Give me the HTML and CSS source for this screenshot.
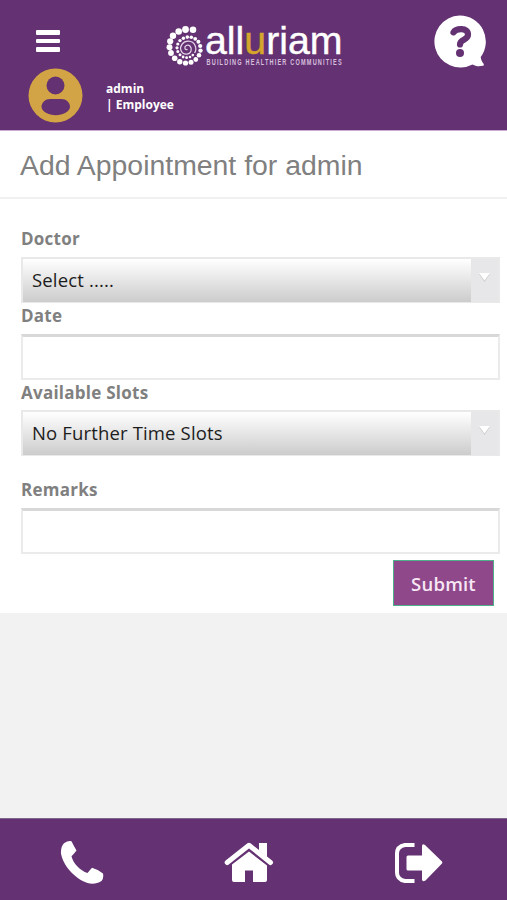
FILE: index.html
```
<!DOCTYPE html>
<html lang="en">
	<head>
		<meta charset="utf-8">
		<meta name="viewport" content="width=device-width, initial-scale=1">
		<title>Add Appointment</title>
		<link rel="stylesheet" href="styles.css">
	</head>

	<body>
		<div class="page">
			<header class="header">
				<div class="bar">
					<div class="menu">
						<span></span>
						<span></span>
						<span></span>
					</div>
					<svg class="logo" width="178" height="54" viewBox="165 16 178 54">
						<!-- dotted spiral -->
						<g fill="#fff">
							<circle cx="193" cy="29.7" r="3.3"/>
							<circle cx="185.5" cy="29.5" r="3.4"/>
							<circle cx="178.7" cy="31.5" r="3.3"/>
							<circle cx="173" cy="35.7" r="3.2"/>
							<circle cx="170.2" cy="41.3" r="3.1"/>
							<circle cx="169.5" cy="47.3" r="3"/>
							<circle cx="171" cy="53" r="2.9"/>
							<circle cx="174.7" cy="58.2" r="2.8"/>
							<circle cx="179.8" cy="61.7" r="2.7"/>
							<circle cx="185.5" cy="63" r="2.6"/>
							<circle cx="191" cy="62.2" r="2.5"/>
							<circle cx="195.8" cy="59.5" r="2.4"/>
							<circle cx="199" cy="55.3" r="2.3"/>
							<circle cx="200.5" cy="50.6" r="2.2"/>
							<circle cx="200.2" cy="46" r="2.1"/>
							<circle cx="198.4" cy="41.8" r="2"/>
							<circle cx="195.2" cy="38.8" r="1.9"/>
							<circle cx="191.3" cy="37.2" r="1.8"/>
							<circle cx="187.3" cy="37.1" r="1.8"/>
							<circle cx="183.4" cy="38.3" r="1.7"/>
							<circle cx="180" cy="40.6" r="1.7"/>
							<circle cx="177.8" cy="44" r="1.6"/>
							<circle cx="177" cy="47.8" r="1.6"/>
							<circle cx="177.8" cy="51.6" r="1.5"/>
							<circle cx="180" cy="54.8" r="1.5"/>
							<circle cx="183.1" cy="57" r="1.4"/>
							<circle cx="186.6" cy="57.7" r="1.4"/>
							<circle cx="190" cy="57" r="1.3"/>
							<circle cx="192.8" cy="55.1" r="1.3"/>
						</g>
						<path d="M194.600 53C197.500 48.500 195 41.500 188.500 41.200C182.500 41 179.500 46.500 181 50.500C183 55.500 189.500 55 191 51C192.300 47 189 44.200 186.300 45.500C183.800 46.800 184.800 50.500 187.500 49.300" fill="none" stroke="#e3d3e8" stroke-width="1.3"/>
						<text class="logo-name" x="205" y="53.500" textLength="137.500" lengthAdjust="spacingAndGlyphs">all<tspan class="gold">u</tspan>riam</text>
						<text class="logo-tag" transform="translate(206.500 64.700) scale(.62 1)" textLength="218">BUILDING HEALTHIER COMMUNITIES</text>
					</svg>
					<svg class="help" width="54" height="54" viewBox="0 0 54 54">
						<path d="M26.500 .5A26 26 0 1 0 39.500 49.500C43 51.500 46 51.500 50 50.800C51.300 50.300 51 49 50 48C48.500 46 48 44 47.700 42A26 26 0 0 0 26.500 .5Z" fill="#fff"/>
						<path d="M20.500 17.300C23 13.300 35 12.300 35 19.500C35 25.500 27 24 27 29.500" fill="none" stroke="#643172" stroke-width="6.200" stroke-linecap="round"/>
						<circle cx="27" cy="38" r="4" fill="#643172"/>
					</svg>
				</div>
				<div class="user">
					<svg width="55" height="55" viewBox="0 0 55 55">
						<circle cx="27.500" cy="27.500" r="27" fill="#d3a445"/>
						<circle cx="27.500" cy="17.500" r="9" fill="#643172"/>
						<path d="M22 31H33.500C38 31 42 34.500 42 38.800C42 43.500 35 47.300 27.700 47.300C20.500 47.300 13.500 43.500 13.500 38.800C13.500 34.500 17.500 31 22 31Z" fill="#643172"/>
					</svg>
					<div class="user-name">admin<br>| Employee</div>
				</div>
			</header>

			<main class="content">
				<h1 class="title">Add Appointment for admin</h1>
				<form class="form">
					<label class="label">Doctor</label>
					<div class="select doctor"><span>Select .....</span><i><svg width="13" height="11" viewBox="0 0 13 11"><path d="M1 2H12L6.500 10Z" fill="#ccc"/><path d="M1 1H12L6.500 8.500Z" fill="#fff"/></svg></i></div>
					<label class="label">Date</label>
					<input class="input" type="text">
					<label class="label available">Available Slots</label>
					<div class="select slots"><span>No Further Time Slots</span><i><svg width="13" height="11" viewBox="0 0 13 11"><path d="M1 2H12L6.500 10Z" fill="#ccc"/><path d="M1 1H12L6.500 8.500Z" fill="#fff"/></svg></i></div>
					<label class="label remarks">Remarks</label>
					<input class="input" type="text">
					<button class="submit" type="button">Submit</button>
				</form>
			</main>

			<footer class="footer">
				<svg width="44" height="44" viewBox="0 0 44 44">
					<path d="M4 2.300Q8 -.5 11.500 .3Q13.500 4.500 16.500 9.500Q14 12.800 11.500 15.200C13 22 20 29.500 27.500 32Q30 29 32 26.800Q38 28.500 43 32.500Q44 37 41.500 40C37 43 32 43.300 27.500 42C14.500 37.500 3 24.500 1 12.500Q.5 6 4 2.300Z" fill="#fff"/>
				</svg>
				<svg width="50" height="42" viewBox="0 0 50 42">
					<path d="M3.200 20.500L25 3.300L46.500 20.500" fill="none" stroke="#fff" stroke-width="5" stroke-linecap="round" stroke-linejoin="round"/>
					<path d="M35 1H43V15L35 8.500Z" fill="#fff"/>
					<path d="M25 9.500L43 23.500V38Q43 40 41 40H29V28.500H21V40H10Q8 40 8 38V22.500Z" fill="#fff"/>
				</svg>
				<svg width="50" height="42" viewBox="0 0 50 42">
					<path d="M20.500 3H11Q3 4.500 3 11.500V30.500Q3 37.500 11 39H20.500" fill="none" stroke="#fff" stroke-width="4"/>
					<path d="M14 13.500H28V4Q28.300 1 31 3L48 19.500Q48.800 20.500 48 21.500L31.500 38.500Q28.300 40.500 28 37.500V28.500H14Q12.500 28.500 12.500 27V15Q12.500 13.500 14 13.500Z" fill="#fff"/>
				</svg>
			</footer>
		</div>
	</body>
</html>
```
FILE: styles.css
```
*{
	box-sizing: border-box;
}
body,h1{
	padding: 0;
	margin: 0;
}
body{
	background: #f2f2f2;
	font-family: "Open Sans", "Noto Sans", sans-serif;
}
svg{
	display: block;
}
.page{
	display: flex;
	flex-direction: column;
	height: 900px;
}
.header{
	height: 130px;
	background: #643172;
	color: #fff;
}
.bar{
	display: flex;
	justify-content: space-between;
	align-items: flex-start;
	height: 68px;
	padding: 15px 20px 0 36px;
}
.menu{
	display: flex;
	flex-direction: column;
	gap: 4px;
	width: 24px;
	margin-top: 15px;
}
.menu span{
	height: 4.5px;
	border-radius: 1px;
	background: #fff;
}
.logo{
	margin: 1px 0 0 15px;
}
.logo-name{
	font-family: "Liberation Sans", Arial, sans-serif;
	font-size: 38px;
	fill: #fff;
	stroke: #fff;
	stroke-width: .4px;
}
.logo-name .gold{
	fill: #d6a62c;
	stroke: #d6a62c;
}
.logo-tag{
	font-family: "Liberation Sans", Arial, sans-serif;
	font-size: 9px;
	font-weight: bold;
	fill: #d6bfdd;
}
.user{
	display: flex;
	gap: 23px;
	padding-left: 28px;
}
.user-name{
	padding-top: 13px;
	font-size: 12px;
	font-weight: bold;
	line-height: 16px;
}
.content{
	height: 483px;
	background: #fff;
	border-top: 1px solid #c7a9d1;
}
.title{
	height: 68px;
	padding-left: 20px;
	border-bottom: 2px solid #f0f0f0;
	font-family: "Liberation Sans", Arial, sans-serif;
	font-size: 28.4px;
	font-weight: normal;
	line-height: 68px;
	color: #808080;
}
.form{
	display: flex;
	flex-direction: column;
	padding: 28px 7px 0 21px;
}
.label{
	height: 24px;
	margin-bottom: 6px;
	font-size: 17px;
	font-weight: bold;
	line-height: 24px;
	letter-spacing: .25px;
	color: #808080;
}
.select{
	display: flex;
	height: 46px;
	border: 2px solid #e9e9e9;
	border-bottom-width: 1px;
	background: linear-gradient(#fff, #ccc);
	font-size: 18.5px;
	line-height: 42px;
	letter-spacing: .15px;
	color: #1c1c1c;
}
.select span{
	flex: 1;
	padding-left: 9px;
}
.select i{
	width: 27px;
	padding: 13px 0 0 7px;
	background: #e7e7e9;
}
.doctor{
	margin-bottom: 1px;
}
.available{
	line-height: 26px;
}
.slots{
	margin-bottom: 21px;
}
.remarks{
	margin-bottom: 7px;
	line-height: 26px;
}
.input{
	width: 100%;
	height: 46px;
	padding: 0 9px;
	border: 2px solid #ebebeb;
	border-top: 3px solid #d8d8d8;
	background: #fff;
	font: 18px "Open Sans", sans-serif;
}
.submit{
	align-self: flex-end;
	width: 101px;
	height: 46px;
	margin: 6px 6px 0 0;
	padding: 0;
	border: 1px solid #4fae8c;
	background: #8f4889;
	font-family: "Open Sans", sans-serif;
	font-size: 18.5px;
	font-weight: 600;
	letter-spacing: .2px;
	color: #f7e6f5;
}
.footer{
	display: flex;
	justify-content: space-between;
	align-items: center;
	height: 82px;
	margin-top: auto;
	padding: 6px 63px 0 60px;
	border-top: 1px solid #81668c;
	background: #643172;
}
```
